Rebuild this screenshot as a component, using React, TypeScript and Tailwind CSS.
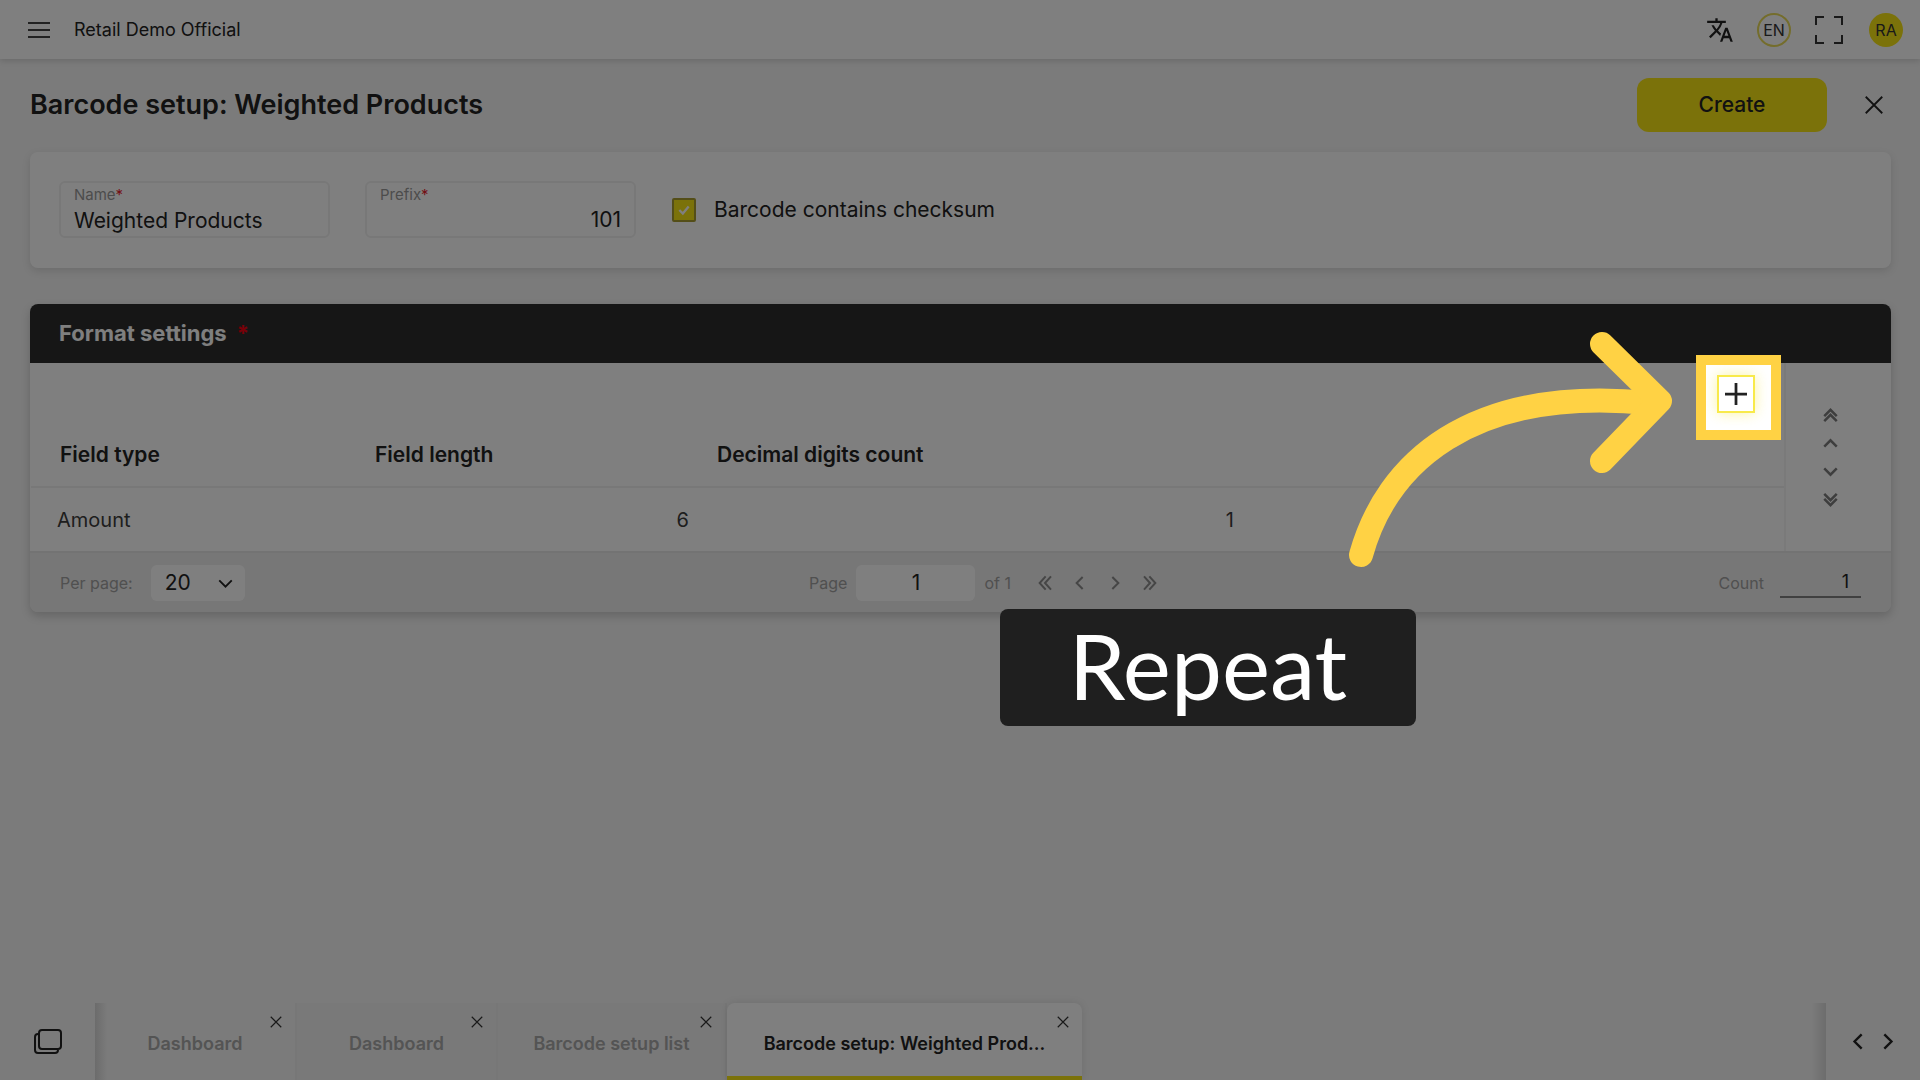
import { useState } from "react";
import type { ReactNode } from "react";

function Icon({ d, className, width = 2 }: { d: string; className: string; width?: number }) {
  return (
    <svg viewBox="0 0 24 24" className={className} fill="none" stroke="currentColor" strokeWidth={width} aria-hidden="true">
      <path d={d} />
    </svg>
  );
}

const CLOSE = "M3 3L21 21M21 3L3 21";
const LEFT = "M16 3L7 12L16 21";
const RIGHT = "M8 3L17 12L8 21";
const LEFT2 = "M13 2L4 12L13 22M21 2L12 12L21 22";
const RIGHT2 = "M11 2L20 12L11 22M3 2L12 12L3 22";
const UP = "M2 17L12 7L22 17";
const DOWN = "M2 7L12 17L22 7";
const UP2 = "M2 13L12 3L22 13M2 21L12 11L22 21";
const DOWN2 = "M2 3L12 13L22 3M2 11L12 21L22 11";

function TopBar() {
  return (
    <header className="flex h-[59px] items-center bg-white pr-[17px] pl-7 shadow-[0_2px_6px_rgba(0,0,0,0.14)]">
      <button aria-label="Menu" className="flex w-[22px] flex-col gap-[5px]">
        <span className="h-[2px] bg-[#444]" />
        <span className="h-[2px] bg-[#444]" />
        <span className="h-[2px] bg-[#444]" />
      </button>
      <span className="ml-6 text-lg">Retail Demo Official</span>
      <div className="ml-auto flex items-center">
        <button aria-label="Translate">
          <svg viewBox="0 0 24 24" className="size-[28px]" fill="currentColor" aria-hidden="true">
            <path d="M12.87 15.07l-2.54-2.51.03-.03A17.52 17.52 0 0 0 14.07 6H17V4h-7V2H8v2H1v2h11.17C11.5 7.92 10.44 9.75 9 11.35 8.07 10.32 7.3 9.19 6.69 8h-2c.73 1.63 1.73 3.17 2.98 4.56l-5.09 5.02L4 19l5-5 3.11 3.11.76-2.04zM18.5 10h-2L12 22h2l1.12-3h4.75L21 22h2l-4.5-12zm-2.62 7l1.62-4.33L19.12 17h-3.24z" />
          </svg>
        </button>
        <button className="ml-[23px] flex size-[34px] items-center justify-center rounded-full border-2 border-[#e8da58] text-base text-[#333]">EN</button>
        <button aria-label="Full screen" className="ml-6">
          <svg viewBox="0 0 28 28" className="size-7" fill="none" stroke="#333" strokeWidth="2" aria-hidden="true">
            <path d="M1 9V1h8M19 1h8v8M27 19v8h-8M9 27H1v-8" />
          </svg>
        </button>
        <button className="ml-[26px] flex size-[34px] items-center justify-center rounded-full bg-[#f7e414] text-base text-[#333]">RA</button>
      </div>
    </header>
  );
}

function Field({ id, label, value, end }: { id: string; label: string; value: string; end?: boolean }) {
  return (
    <div className="flex h-[57px] w-[271px] flex-col rounded-md border-2 border-[#f0f0f0] px-[13px]">
      <label htmlFor={id} className="h-[23px] pt-[2px] text-[15px] leading-5 text-[#999]">
        {label}
        <span className="text-[#e8202a]">*</span>
      </label>
      <input id={id} defaultValue={value} className={end ? "h-7 w-full text-right text-[21px] leading-7" : "h-8 w-full text-[21px] leading-8"} />
    </div>
  );
}

function PagerButton({ label, d }: { label: string; d: string }) {
  return (
    <button aria-label={label} className="flex w-[35px] justify-center text-[#8c8c8c]">
      <Icon d={d} className="size-4" width={3} />
    </button>
  );
}

function RowMove({ label, d }: { label: string; d: string }) {
  return (
    <button aria-label={label} className="text-[#7c7c7c]">
      <Icon d={d} className="size-[15px]" width={4} />
    </button>
  );
}

function GuideStep({ children }: { children: ReactNode }) {
  return (
    <div className="relative">
      {children}
      <div className="pointer-events-none absolute -top-5 -left-[21px] z-10 size-[85px] border-10 border-[#ffd244] shadow-[0_0_0_4000px_rgba(0,0,0,0.5)]" />
      <svg viewBox="1348 330 324 240" className="pointer-events-none absolute top-[-45px] left-[-369px] z-20 h-[240px] w-[324px]" fill="none" stroke="#ffd244" strokeWidth="24" strokeLinecap="round" strokeLinejoin="round" aria-hidden="true">
        <path d="M1361 555C1386 465 1468 385 1650 403" />
        <path d="M1602 344L1660 401L1602 461" />
      </svg>
      <div className="absolute top-[234px] left-[-717px] z-20 flex h-[117px] w-[416px] items-center justify-center rounded-lg bg-[#1f1f1f] pb-[7px] font-['Lato',sans-serif] text-[91px] leading-none text-white">
        Repeat
      </div>
    </div>
  );
}

function FormatSettings() {
  return (
    <section className="mt-9 mr-[29px] ml-[30px] rounded-lg shadow-[0_4px_10px_rgba(0,0,0,0.18)]">
      <h2 className="flex h-[59px] items-center rounded-t-lg bg-[#2d2d2d] px-[29px] text-[22px] font-bold text-white">
        Format settings<span className="ml-[10px] text-[#f00010]">*</span>
      </h2>
      <div className="flex bg-white">
        <div className="min-w-0 flex-1 border-r-2 border-[#f4f4f4] pl-px">
          <div className="flex h-[60px] justify-end pt-3 pr-[29px]">
            <GuideStep>
              <button aria-label="Add row" className="flex size-[38px] items-center justify-center border-2 border-[#f8ea4a] bg-white shadow-[0_0_14px_rgba(247,228,20,0.4)]">
                <Icon d="M12 0V24M0 12H24" className="size-[22px]" width={3} />
              </button>
            </GuideStep>
          </div>
          <table className="w-full table-fixed text-left">
            <thead>
              <tr className="h-16 border-b-2 border-[#f0f0f0] text-[21px]">
                <th className="w-[333px] pl-[29px] font-semibold">Field type</th>
                <th className="w-[341px] pl-[11px] font-semibold">Field length</th>
                <th className="w-[545px] pl-3 font-semibold">Decimal digits count</th>
                <th />
              </tr>
            </thead>
            <tbody>
              <tr className="h-16 text-xl text-[#3c3c3c]">
                <td className="pl-[26px]">Amount</td>
                <td className="pr-4 text-right">6</td>
                <td className="pr-4 text-right">1</td>
                <td />
              </tr>
            </tbody>
          </table>
        </div>
        <div className="flex w-[105px] flex-none flex-col items-center gap-[13px] pt-[45px] pr-4">
          <RowMove label="Move to top" d={UP2} />
          <RowMove label="Move up" d={UP} />
          <RowMove label="Move down" d={DOWN} />
          <RowMove label="Move to bottom" d={DOWN2} />
        </div>
      </div>
      <div className="flex h-[61px] items-center rounded-b-lg border-t-2 border-[#e6e6e6] bg-[#eee] pr-[30px] pl-[30px] text-base text-[#a0a0a0]">
        <div className="flex flex-1 items-center">
          <label htmlFor="per-page">Per page:</label>
          <div className="relative ml-[18px]">
            <select id="per-page" defaultValue="20" className="h-9 w-[94px] appearance-none rounded-md bg-white pl-[14px] text-[21px] text-[#222]">
              <option>20</option>
              <option>50</option>
            </select>
            <Icon d={DOWN} className="pointer-events-none absolute top-[11px] right-3 size-[15px] text-[#222]" width={3} />
          </div>
        </div>
        <div className="ml-[56px] flex items-center">
          <label htmlFor="page">Page</label>
          <input id="page" defaultValue="1" className="mr-[9px] ml-[9px] h-9 w-[119px] rounded-md bg-white text-center text-[21px] text-[#222]" />
          <span>of 1</span>
          <div className="ml-[17px] flex">
            <PagerButton label="First page" d={LEFT2} />
            <PagerButton label="Previous page" d={LEFT} />
            <PagerButton label="Next page" d={RIGHT} />
            <PagerButton label="Last page" d={RIGHT2} />
          </div>
        </div>
        <div className="flex flex-1 items-center justify-end">
          <label htmlFor="count">Count</label>
          <input id="count" readOnly value="1" className="ml-4 h-[30px] w-[81px] border-b-2 border-[#808080] pr-3 text-right text-lg text-[#222]" />
        </div>
      </div>
    </section>
  );
}

function Tab({ title, active, className }: { title: string; active?: boolean; className: string }) {
  return (
    <div
      className={
        (active
          ? "rounded-t-lg border-b-4 border-[#f7e414] bg-white text-[#222] shadow-[0_0_8px_rgba(0,0,0,0.1)] "
          : "border-r-2 border-[#eeeeee] text-[#a8a8a8] ") +
        "flex h-[77px] flex-col " +
        className
      }
    >
      <button aria-label={"Close " + title} className="mt-3 mr-3 self-end text-[#333]">
        <Icon d={CLOSE} className="size-[14px]" width={2} />
      </button>
      <a href="#tab" className="mt-[3px] text-center text-lg leading-6 font-semibold">{title}</a>
    </div>
  );
}

function TabBar() {
  return (
    <footer className="mt-auto flex h-[77px]">
      <button aria-label="All windows" className="flex w-[95px] items-center pl-[33px]">
        <svg viewBox="0 0 30 27" className="h-[27px] w-[30px]" fill="none" stroke="currentColor" strokeWidth="2" aria-hidden="true">
          <rect x="6" y="2" width="22" height="19" rx="3" />
          <path d="M5 6C3 6 2 7 2 9V22Q2 25 5 25H22Q25 25 25 22" />
        </svg>
      </button>
      <nav className="flex grow bg-[linear-gradient(to_right,#d8d8d8,#f6f6f6_12px,#f6f6f6_calc(100%-14px),#dadada)]">
        <Tab title="Dashboard" className="w-[202px]" />
        <Tab title="Dashboard" className="w-[201px] bg-[#f3f3f3]" />
        <Tab title="Barcode setup list" className="w-[229px] bg-[#f3f3f3]" />
        <Tab title="Barcode setup: Weighted Prod..." active className="w-[355px]" />
      </nav>
      <div className="flex w-[94px] items-center justify-center gap-[10px]">
        <button aria-label="Scroll tabs left">
          <Icon d={LEFT} className="size-[19px]" width={3} />
        </button>
        <button aria-label="Scroll tabs right">
          <Icon d={RIGHT} className="size-[19px]" width={3} />
        </button>
      </div>
    </footer>
  );
}

export default function App() {
  const [checksum, setChecksum] = useState(true);
  return (
    <div className="relative flex min-h-screen flex-col overflow-hidden bg-[#f6f6f6] font-['Inter',sans-serif] text-[#222]">
      <TopBar />
      <div className="mt-[19px] flex h-[54px] items-center pr-[30px] pl-[30px]">
        <h1 className="text-[27px] font-semibold">Barcode setup: Weighted Products</h1>
        <button className="ml-auto h-[54px] w-[190px] rounded-xl bg-[#f7e414] text-[21px] font-medium">Create</button>
        <button aria-label="Close" className="mr-[5px] ml-[36px]">
          <Icon d={CLOSE} className="size-[22px]" width={2} />
        </button>
      </div>
      <section className="mt-5 mr-[29px] ml-[30px] flex items-center rounded-lg bg-white px-[29px] pt-[29px] pb-[30px] shadow-[0_3px_8px_rgba(0,0,0,0.12)]">
        <Field id="name" label="Name" value="Weighted Products" />
        <div className="ml-[35px]">
          <Field id="prefix" label="Prefix" value="101" end />
        </div>
        <label className="ml-[36px] flex items-center text-[21px]">
          <span className="relative mr-[18px] flex">
            <input
              type="checkbox"
              checked={checksum}
              onChange={() => setChecksum(!checksum)}
              className="size-6 appearance-none rounded-xs border-2 border-[#a89d30] bg-white checked:bg-[#f7e414]"
            />
            {checksum && <Icon d="M4 12L10 18L20 6" className="pointer-events-none absolute inset-[5px] size-[14px] text-white" width={4} />}
          </span>
          Barcode contains checksum
        </label>
      </section>
      <FormatSettings />
      <TabBar />
    </div>
  );
}
